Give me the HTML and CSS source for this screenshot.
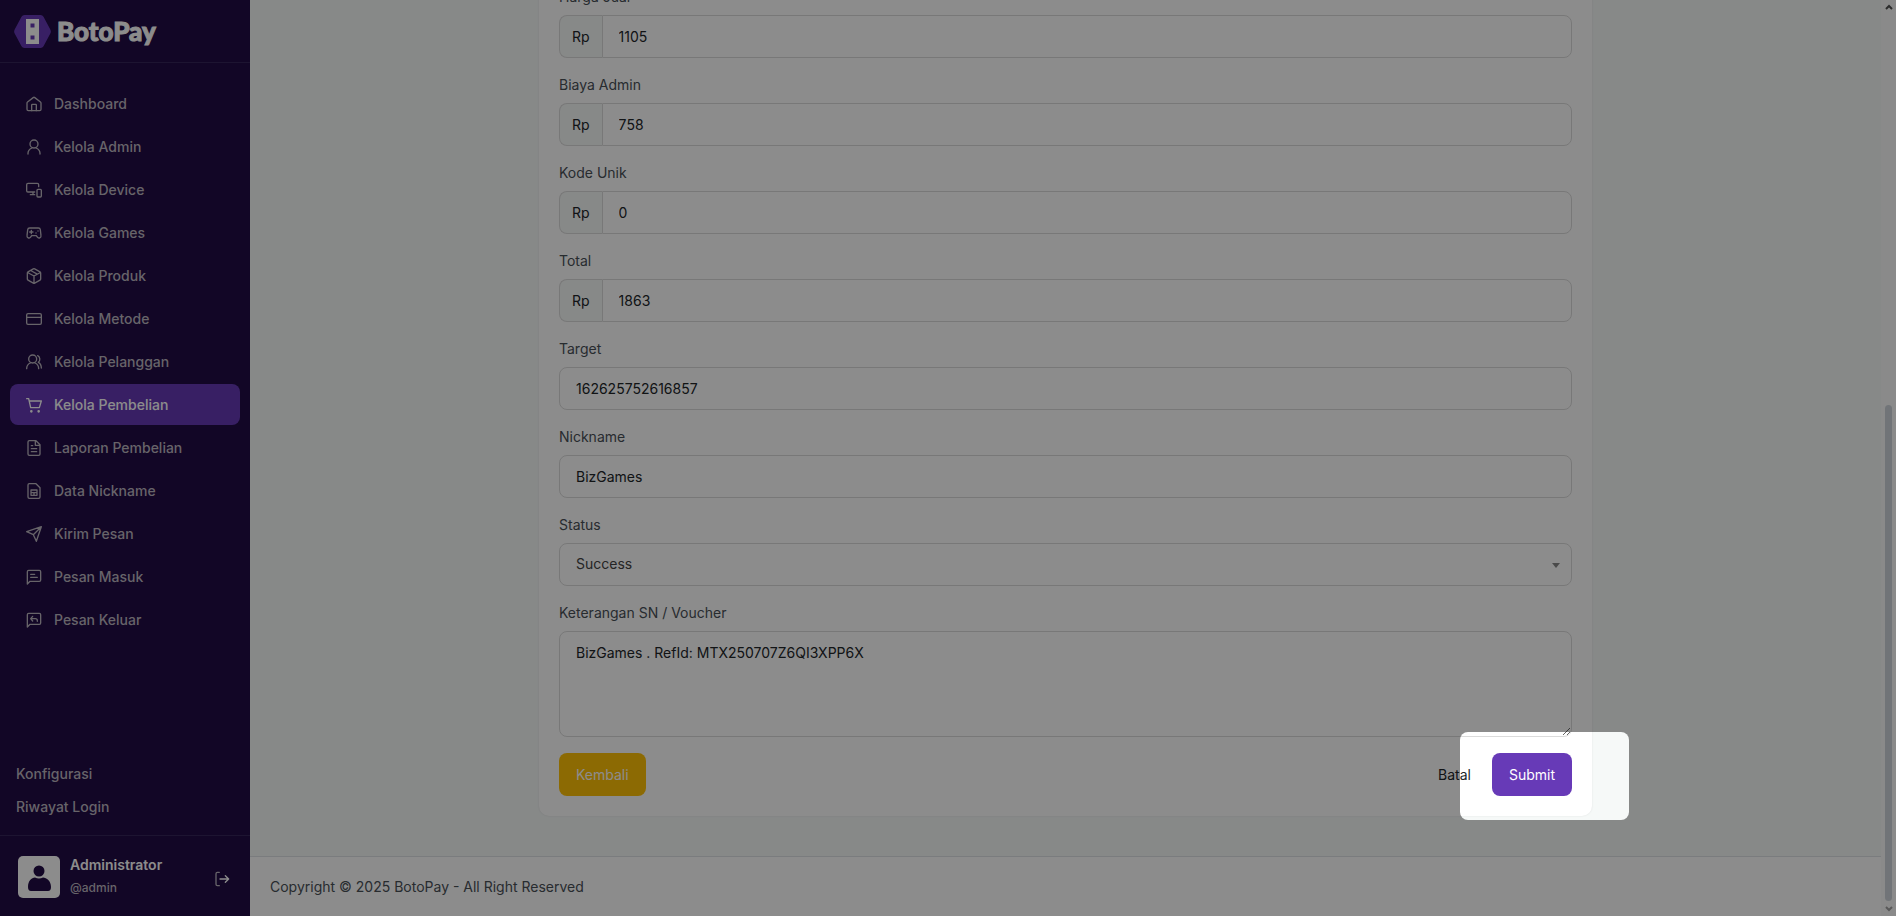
FILE: index.html
```html
<!DOCTYPE html>
<html lang="id">
<head>
<meta charset="utf-8">
<meta name="viewport" content="width=device-width, initial-scale=1">
<title>BotoPay - Kelola Pembelian</title>
<link rel="stylesheet" href="styles.css">
</head>
<body>
<div class="app">
  <aside class="sidebar">
    <a class="brand" href="#">
      <svg class="brand-mark" viewBox="0 0 37 33" aria-hidden="true"><path fill="#673ab7" d="M10.500 0h16q2 0 3 1.700l6.700 12.500q1.300 2.300 0 4.600l-6.700 12.500q-1 1.700-3 1.700h-16q-2 0-3-1.700L.8 18.800q-1.300-2.300 0-4.600L7.500 1.700q1-1.700 3-1.700z"/><path fill="#fff" fill-rule="evenodd" d="M12 4h13v25H12zM16.500 8.500v4h4v-4zM16.500 20.500v4h4v-4z"/></svg>
      <span class="brand-name">BotoPay</span>
    </a>
    <nav class="nav">
      <a class="nav-item" href="#"><svg class="icon" viewBox="0 0 24 24"><path d="M1.500 10.500a2 2 0 0 1 .8-1.600l8.500-6.500a2 2 0 0 1 2.400 0l8.500 6.500a2 2 0 0 1 .8 1.600V20a2 2 0 0 1-2 2h-17a2 2 0 0 1-2-2z"/><path d="M8.500 22v-8.500a1 1 0 0 1 1-1h5a1 1 0 0 1 1 1V22"/></svg>Dashboard</a>
      <a class="nav-item" href="#"><svg class="icon" viewBox="0 0 24 24"><circle cx="12" cy="7.500" r="6"/><path d="M3 22.500v-1c0-3.500 2.500-6.500 6-8M21 22.500v-1c0-3.500-2.500-6.500-6-8"/></svg>Kelola Admin</a>
      <a class="nav-item" href="#"><svg class="icon" viewBox="0 0 24 24"><path d="M19 7V4a2 2 0 0 0-2-2H3a2 2 0 0 0-2 2v9a2 2 0 0 0 2 2h10M10.500 19v-4M6.500 19H13"/><rect x="16.500" y="11" width="6.500" height="11.500" rx="1.500"/></svg>Kelola Device</a>
      <a class="nav-item" href="#"><svg class="icon" viewBox="0 0 24 24"><path d="M5.500 4.500h13a3 3 0 0 1 3 2.700l1 8.800a3 3 0 0 1-5.400 2.200L15.500 16h-7l-1.600 2.200A3 3 0 0 1 1.500 16l1-8.800a3 3 0 0 1 3-2.700z"/><path d="M8 8v5M5.500 10.500h5M15 12h.1M18 9h.1"/></svg>Kelola Games</a>
      <a class="nav-item" href="#"><svg class="icon" viewBox="0 0 24 24"><path d="M11 22.700a2 2 0 0 0 2 0l8-4.400a2 2 0 0 0 1-1.700V7.400a2 2 0 0 0-1-1.700l-8-4.400a2 2 0 0 0-2 0L3 5.700a2 2 0 0 0-1 1.700v9.200a2 2 0 0 0 1 1.700zM12 22.500V12M2.300 6.700 12 12l9.700-5.300M7 3.700l10 5.500"/></svg>Kelola Produk</a>
      <a class="nav-item" href="#"><svg class="icon" viewBox="0 0 24 24"><rect x="1" y="4" width="22" height="16" rx="2"/><path d="M1 9.500h22"/></svg>Kelola Metode</a>
      <a class="nav-item" href="#"><svg class="icon" viewBox="0 0 24 24"><circle cx="10" cy="7.500" r="6"/><path d="M1 22c0-4 2-7 5.500-8.500M19 22c0-4-2-7-5.500-8.500M17.500 2.500a6 6 0 0 1 1 10c2.800 1.500 4.500 4.500 4.500 8.500"/></svg>Kelola Pelanggan</a>
      <a class="nav-item nav-item-active" href="#" aria-current="page"><svg class="icon" viewBox="0 0 24 24"><path d="M1 2.500h3l3 13.500h13L23 6H5"/><circle cx="8" cy="21.500" r="1"/><circle cx="19" cy="21.500" r="1"/></svg>Kelola Pembelian</a>
      <a class="nav-item" href="#"><svg class="icon" viewBox="0 0 24 24"><path d="M15 1H5a2 2 0 0 0-2 2v18a2 2 0 0 0 2 2h14a2 2 0 0 0 2-2V7zM14 1v7h7M8 8.500h2M8 13h8M8 17.500h8"/></svg>Laporan Pembelian</a>
      <a class="nav-item" href="#"><svg class="icon" viewBox="0 0 24 24"><path d="M15 1H5a2 2 0 0 0-2 2v18a2 2 0 0 0 2 2h14a2 2 0 0 0 2-2V7zM7.500 10.500h9v8h-9zM7.500 14.500h9M12 14.500v4"/></svg>Data Nickname</a>
      <a class="nav-item" href="#"><svg class="icon" viewBox="0 0 24 24"><path d="M23 1 15.500 23l-4.500-10L1 8.500zM23 1 11 13"/></svg>Kirim Pesan</a>
      <a class="nav-item" href="#"><svg class="icon" viewBox="0 0 24 24"><path d="M2 22.500V4a2 2 0 0 1 2-2h16a2 2 0 0 1 2 2v12.500a2 2 0 0 1-2 2H6zM7 8h6M7 12.500h10"/></svg>Pesan Masuk</a>
      <a class="nav-item" href="#"><svg class="icon" viewBox="0 0 24 24"><path d="M2 22.500V4a2 2 0 0 1 2-2h16a2 2 0 0 1 2 2v12.500a2 2 0 0 1-2 2H6zM10 6.500l-3 3.500 3 3.500M7 10h7a3 3 0 0 1 3 3v1"/></svg>Pesan Keluar</a>
    </nav>
    <nav class="nav-secondary">
      <a class="nav-link" href="#">Konfigurasi</a>
      <a class="nav-link" href="#">Riwayat Login</a>
    </nav>
    <div class="profile">
      <svg class="avatar" viewBox="0 0 42 42" aria-hidden="true"><rect width="42" height="42" rx="5" fill="#fff"/><circle cx="21" cy="15" r="5.500" fill="#210b45"/><path fill="#210b45" d="M10 31c0-6 3.500-9.500 7-9.500 2.500 1.300 5.500 1.300 8 0 3.500 0 8 3.500 8 9.500 0 2.500-1 4-3 4H13c-2 0-3-1.500-3-4z"/></svg>
      <div class="profile-text">
        <strong class="profile-name">Administrator</strong>
        <span class="profile-user">@admin</span>
      </div>
      <button class="logout" type="button" aria-label="Keluar"><svg class="icon" viewBox="0 0 24 24"><path d="M8 2H5a2 2 0 0 0-2 2v16a2 2 0 0 0 2 2h3"/><path class="logout-arrow" d="M9 12h13M17 7l5 5-5 5"/></svg></button>
    </div>
  </aside>

  <div class="page">
    <main class="content">
      <form class="card">
        <div class="field"><label for="harga">Harga Jual</label><div class="group"><span class="addon">Rp</span><input class="control" id="harga" type="text" value="1105"></div></div>
        <div class="field"><label for="admin">Biaya Admin</label><div class="group"><span class="addon">Rp</span><input class="control" id="admin" type="text" value="758"></div></div>
        <div class="field"><label for="unik">Kode Unik</label><div class="group"><span class="addon">Rp</span><input class="control" id="unik" type="text" value="0"></div></div>
        <div class="field"><label for="total">Total</label><div class="group"><span class="addon">Rp</span><input class="control" id="total" type="text" value="1863"></div></div>
        <div class="field"><label for="target">Target</label><input class="control" id="target" type="text" value="162625752616857"></div>
        <div class="field"><label for="nickname">Nickname</label><input class="control" id="nickname" type="text" value="BizGames"></div>
        <div class="field"><label for="status">Status</label>
          <div class="select-wrap"><select class="control select" id="status"><option>Success</option></select><span class="caret"></span></div>
        </div>
        <div class="field"><label for="sn">Keterangan SN / Voucher</label><textarea class="control textarea" id="sn" spellcheck="false">BizGames . RefId: MTX250707Z6QI3XPP6X</textarea></div>
        <div class="actions">
          <button class="btn btn-back" type="button">Kembali</button>
          <button class="btn btn-plain" type="reset">Batal</button>
          <div class="submit-wrap">
            <button class="btn btn-submit" type="submit">Submit</button>
            <div class="spotlight"></div>
          </div>
        </div>
      </form>
    </main>
    <footer class="footer">Copyright © 2025 BotoPay - All Right Reserved</footer>
  </div>

  <div class="scrollbar" aria-hidden="true">
    <svg class="scroll-arrow" viewBox="0 0 8 6"><path d="M1 5l3-3 3 3" stroke="#505050"/></svg>
    <div class="scroll-track"><div class="scroll-thumb"></div></div>
    <svg class="scroll-arrow" viewBox="0 0 8 6"><path d="M1 1l3 3 3-3" stroke="#a0a0a0"/></svg>
  </div>
</div>
</body>
</html>
```

FILE: styles.css
```css
* { box-sizing: border-box; }

body {
  margin: 0;
  font-family: Inter, "Liberation Sans", sans-serif;
  font-size: 14px;
  line-height: 21px;
  color: #212529;
  background: #f6f9f8;
}

a { color: inherit; text-decoration: none; }
button, input, select, textarea { font: inherit; color: inherit; }

.app {
  display: flex;
  height: 100vh;
  overflow: hidden;
}

/* Sidebar */
.sidebar {
  flex: none;
  width: 250px;
  display: flex;
  flex-direction: column;
  background: #210b45;
  color: #bcb6c0;
  font-weight: 500;
}

.brand {
  display: flex;
  align-items: center;
  gap: 6px;
  height: 63px;
  padding-left: 14px;
  border-bottom: 1px solid #36255a;
}
.brand-mark { width: 37px; height: 33px; }
.brand-name {
  font-family: Lato, sans-serif;
  font-size: 26px;
  font-weight: 900;
  color: #fff;
  -webkit-text-stroke: 1px #fff;
}

.nav {
  flex: 1;
  display: flex;
  flex-direction: column;
  gap: 2px;
  padding: 20px 10px;
}
.nav-item {
  display: flex;
  align-items: center;
  gap: 12px;
  height: 41px;
  padding: 0 16px;
  border-radius: 8px;
}
.nav-item-active { background: #673ab7; color: #fff; }

.icon {
  width: 16px;
  height: 16px;
  fill: none;
  stroke: currentColor;
  stroke-width: 2;
  stroke-linecap: round;
  stroke-linejoin: round;
}

.nav-secondary {
  display: flex;
  flex-direction: column;
  padding: 0 16px 12px;
}
.nav-link { line-height: 33px; }

.profile {
  display: flex;
  align-items: center;
  gap: 10px;
  height: 81px;
  padding: 2px 20px 0 18px;
  border-top: 1px solid #36255a;
}
.avatar { width: 42px; height: 42px; }
.profile-text {
  flex: 1;
  display: flex;
  flex-direction: column;
  gap: 2px;
  padding-bottom: 2px;
}
.profile-name { font-weight: 600; color: #fff; }
.profile-user { font-size: 12px; }
.logout {
  display: flex;
  padding: 4px 0 0;
  border: 0;
  background: none;
}
.logout-arrow { stroke: #fff; }

/* Page */
.page {
  flex: 1;
  min-width: 0;
  display: flex;
  flex-direction: column;
  justify-content: flex-end;
}
.content { flex: none; padding: 0 20px 40px; background: #f6f9f8; }
.card {
  width: 100%;
  max-width: 1053px;
  margin: 0 auto;
  padding: 20px;
  border-radius: 10px;
  background: #fff;
  box-shadow: 0 0 2px #0000001a;
}

.field {
  display: flex;
  flex-direction: column;
  gap: 8px;
  margin-bottom: 16px;
}
.field label { color: #495057; }

.control {
  width: 100%;
  min-width: 0;
  height: 43px;
  padding: 0 16px;
  border: 1px solid #dbdbdb;
  border-radius: 8px;
  background: #fff;
  outline: 0;
}
.group { display: flex; }
.addon {
  flex: none;
  display: flex;
  align-items: center;
  padding: 0 12px;
  border: 1px solid #dbdbdb;
  border-right: 0;
  border-radius: 8px 0 0 8px;
  background: #f6f9f8;
}
.group .control { border-radius: 0 8px 8px 0; }

.select-wrap { position: relative; }
.select {
  display: block;
  appearance: none;
  padding-bottom: 2px;
  color: #444;
}
.caret {
  position: absolute;
  top: 20px;
  right: 12px;
  border: 4px solid transparent;
  border-top: 5px solid #888;
  border-bottom: 0;
}
.textarea { height: 106px; padding: 10px 16px; resize: vertical; }

.actions { display: flex; gap: 4px; }
.btn {
  height: 43px;
  padding: 0 17px;
  border: 0;
  border-radius: 8px;
  background: none;
}
.btn-back { margin-right: auto; background: #ffc107; color: #fff; }
.btn-submit { background: #673ab7; color: #fff; }

/* Highlight around the submit button, dimming everything else */
.submit-wrap { position: relative; }
.spotlight {
  position: absolute;
  z-index: 10;
  top: -21px;
  right: -57px;
  width: 169px;
  height: 88px;
  border-radius: 8px;
  box-shadow: 0 0 0 2000px rgba(0, 0, 0, 0.45);
  pointer-events: none;
}

.footer {
  flex: none;
  padding: 19px 20px;
  border-top: 1px solid #dee2e6;
  background: #fff;
  color: #495057;
}

/* Scrollbar */
.scrollbar {
  flex: none;
  width: 15px;
  display: flex;
  flex-direction: column;
  align-items: center;
  padding: 4px 0;
  background: #fcfcfc;
}
.scroll-arrow { width: 8px; height: 6px; fill: none; stroke-width: 2; }
.scroll-track {
  flex: 1;
  display: flex;
  flex-direction: column;
  justify-content: flex-end;
  padding: 5px 0;
}
.scroll-thumb { width: 7px; height: 56%; border-radius: 4px; background: #ced4da; }
```
